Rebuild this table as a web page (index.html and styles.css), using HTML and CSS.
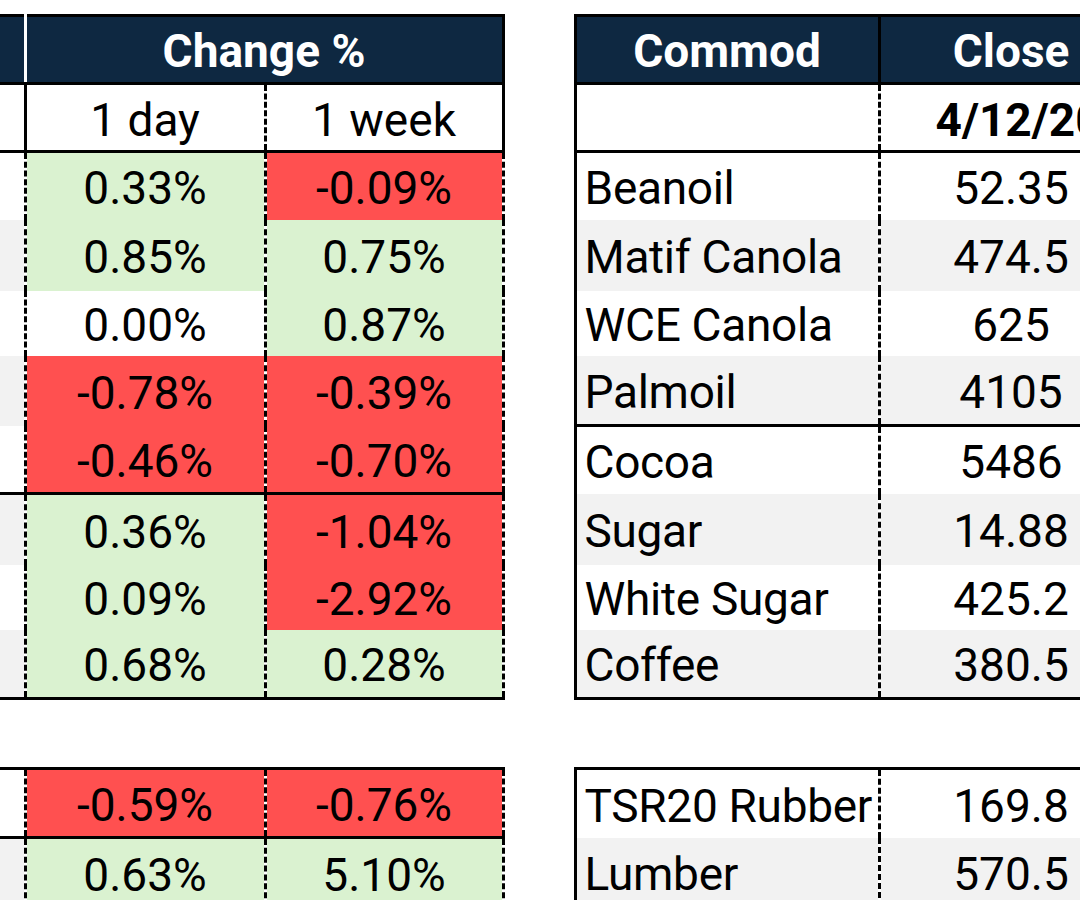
FILE: index.html
```html
<!DOCTYPE html>
<html lang="en">
<head>
<meta charset="utf-8">
<title>Commodities</title>
<link rel="stylesheet" href="styles.css">
</head>
<body>
<div class="sheet">
  <div class="block">
    <table class="grid chg">
      <colgroup><col class="c-stub"><col class="c-day"><col class="c-week"></colgroup>
      <tr class="r-head"><th class="stub"></th><th colspan="2" class="head">Change %</th></tr>
      <tr class="r-sub"><td class="stub"></td><td class="mid">1 day</td><td class="end">1 week</td></tr>
      <tr class="h68"><td class="stub"></td><td class="mid pos">0.33%</td><td class="end neg">-0.09%</td></tr>
      <tr class="h71 alt"><td class="stub"></td><td class="mid pos">0.85%</td><td class="end pos">0.75%</td></tr>
      <tr class="h65"><td class="stub"></td><td class="mid">0.00%</td><td class="end pos">0.87%</td></tr>
      <tr class="h70 alt"><td class="stub"></td><td class="mid neg">-0.78%</td><td class="end neg">-0.39%</td></tr>
      <tr class="h68 group-end"><td class="stub"></td><td class="mid neg">-0.46%</td><td class="end neg">-0.70%</td></tr>
      <tr class="h71 alt"><td class="stub"></td><td class="mid pos">0.36%</td><td class="end neg">-1.04%</td></tr>
      <tr class="h65"><td class="stub"></td><td class="mid pos">0.09%</td><td class="end neg">-2.92%</td></tr>
      <tr class="h69 alt group-end"><td class="stub"></td><td class="mid pos">0.68%</td><td class="end pos">0.28%</td></tr>
    </table>
    <table class="grid chg second">
      <colgroup><col class="c-stub"><col class="c-day"><col class="c-week"></colgroup>
      <tr class="h69 first group-end"><td class="stub"></td><td class="mid neg">-0.59%</td><td class="end neg">-0.76%</td></tr>
      <tr class="h69 alt"><td class="stub"></td><td class="mid pos">0.63%</td><td class="end pos">5.10%</td></tr>
    </table>
  </div>
  <div class="block">
    <table class="grid cmd">
      <colgroup><col class="c-name"><col class="c-close"></colgroup>
      <tr class="r-head"><th class="name">Commod</th><th class="close">Close</th></tr>
      <tr class="r-sub"><td class="name"></td><td class="close date">4/12/2025</td></tr>
      <tr class="h68"><td class="name">Beanoil</td><td class="close">52.35</td></tr>
      <tr class="h71 alt"><td class="name">Matif Canola</td><td class="close">474.5</td></tr>
      <tr class="h65"><td class="name">WCE Canola</td><td class="close">625</td></tr>
      <tr class="h70 alt group-end"><td class="name">Palmoil</td><td class="close">4105</td></tr>
      <tr class="h68"><td class="name">Cocoa</td><td class="close">5486</td></tr>
      <tr class="h71 alt"><td class="name">Sugar</td><td class="close">14.88</td></tr>
      <tr class="h65"><td class="name">White Sugar</td><td class="close">425.2</td></tr>
      <tr class="h69 alt group-end"><td class="name">Coffee</td><td class="close">380.5</td></tr>
    </table>
    <table class="grid cmd second">
      <colgroup><col class="c-name"><col class="c-close"></colgroup>
      <tr class="h69 first"><td class="name">TSR20 Rubber</td><td class="close">169.8</td></tr>
      <tr class="h69 alt"><td class="name">Lumber</td><td class="close">570.5</td></tr>
    </table>
  </div>
</div>
</body>
</html>
```

FILE: styles.css
```css
html, body {
  margin: 0;
  padding: 0;
  overflow: hidden;
  background: #ffffff;
}

body {
  font-family: Roboto, "Liberation Sans", sans-serif;
  color: #000000;
}

.sheet {
  display: flex;
  align-items: flex-start;
  gap: 69px;
  padding-top: 14px;
  width: 1200px;
}

.block {
  display: flex;
  flex-direction: column;
  gap: 67px;
  flex: none;
}

.grid {
  border-collapse: collapse;
  table-layout: fixed;
  font-size: 46px;
  line-height: 1;
}

.chg { width: 503px; }
.cmd { width: 568px; }

.grid th,
.grid td {
  border: 0;
  padding: 4px 0 0;
  text-align: center;
  vertical-align: middle;
  white-space: nowrap;
  overflow: hidden;
}

/* column widths */
.c-stub { width: 25px; }
.c-day { width: 240px; }
.c-week { width: 238px; }
.c-name { width: 304px; }
.c-close { width: 264px; }

/* row heights */
.r-head { height: 68px; }
.r-sub { height: 68px; }
.h65 { height: 65px; }
.h68 { height: 68px; }
.h69 { height: 69px; }
.h70 { height: 70px; }
.h71 { height: 71px; }

/* header */
.r-head th {
  background: #0e2841;
  color: #ffffff;
  font-weight: 700;
  border-top: 3px solid #000;
  border-bottom: 3px solid #000;
  padding-top: 3px;
}
.chg .r-head th.stub { border-right: 3px solid #ffffff; }
.chg .r-head th.head { border-right: 3px solid #000; }
.cmd .r-head th.name { border-left: 3px solid #000; border-right: 3px solid #000; }
.cmd .r-head th.close { border-right: 3px solid #000; }

/* sub header row */
.r-sub td { border-bottom: 3px solid #000; padding-top: 5px; }
.chg .r-sub td.stub { border-right: 3px solid #000; }
.chg .r-sub td.mid { border-right: 3px dashed #000; }
.chg .r-sub td.end { border-right: 3px solid #000; }
.cmd .r-sub td.date {
  font-weight: 700;
  text-align: left;
  padding-left: 55px;
}

/* body cells */
.chg td.stub { border-right: 3px dashed #000; }
.chg td.mid { border-right: 3px dashed #000; }
.chg td.end { border-right: 3px dashed #000; }

.cmd td.name {
  border-left: 3px solid #000;
  border-right: 3px dashed #000;
  text-align: left;
  padding-left: 8px;
  letter-spacing: -0.3px;
}
.cmd td.close { border-right: 3px solid #000; }

.cmd .r-sub td.name { border-right: 3px dashed #000; }

.group-end td { border-bottom: 3px solid #000; }
.second .first td { border-top: 3px solid #000; }

/* backgrounds */
.alt td { background: #f2f2f2; }
.grid td.pos { background: #daf2d0; }
.grid td.neg { background: #ff5050; }
```
